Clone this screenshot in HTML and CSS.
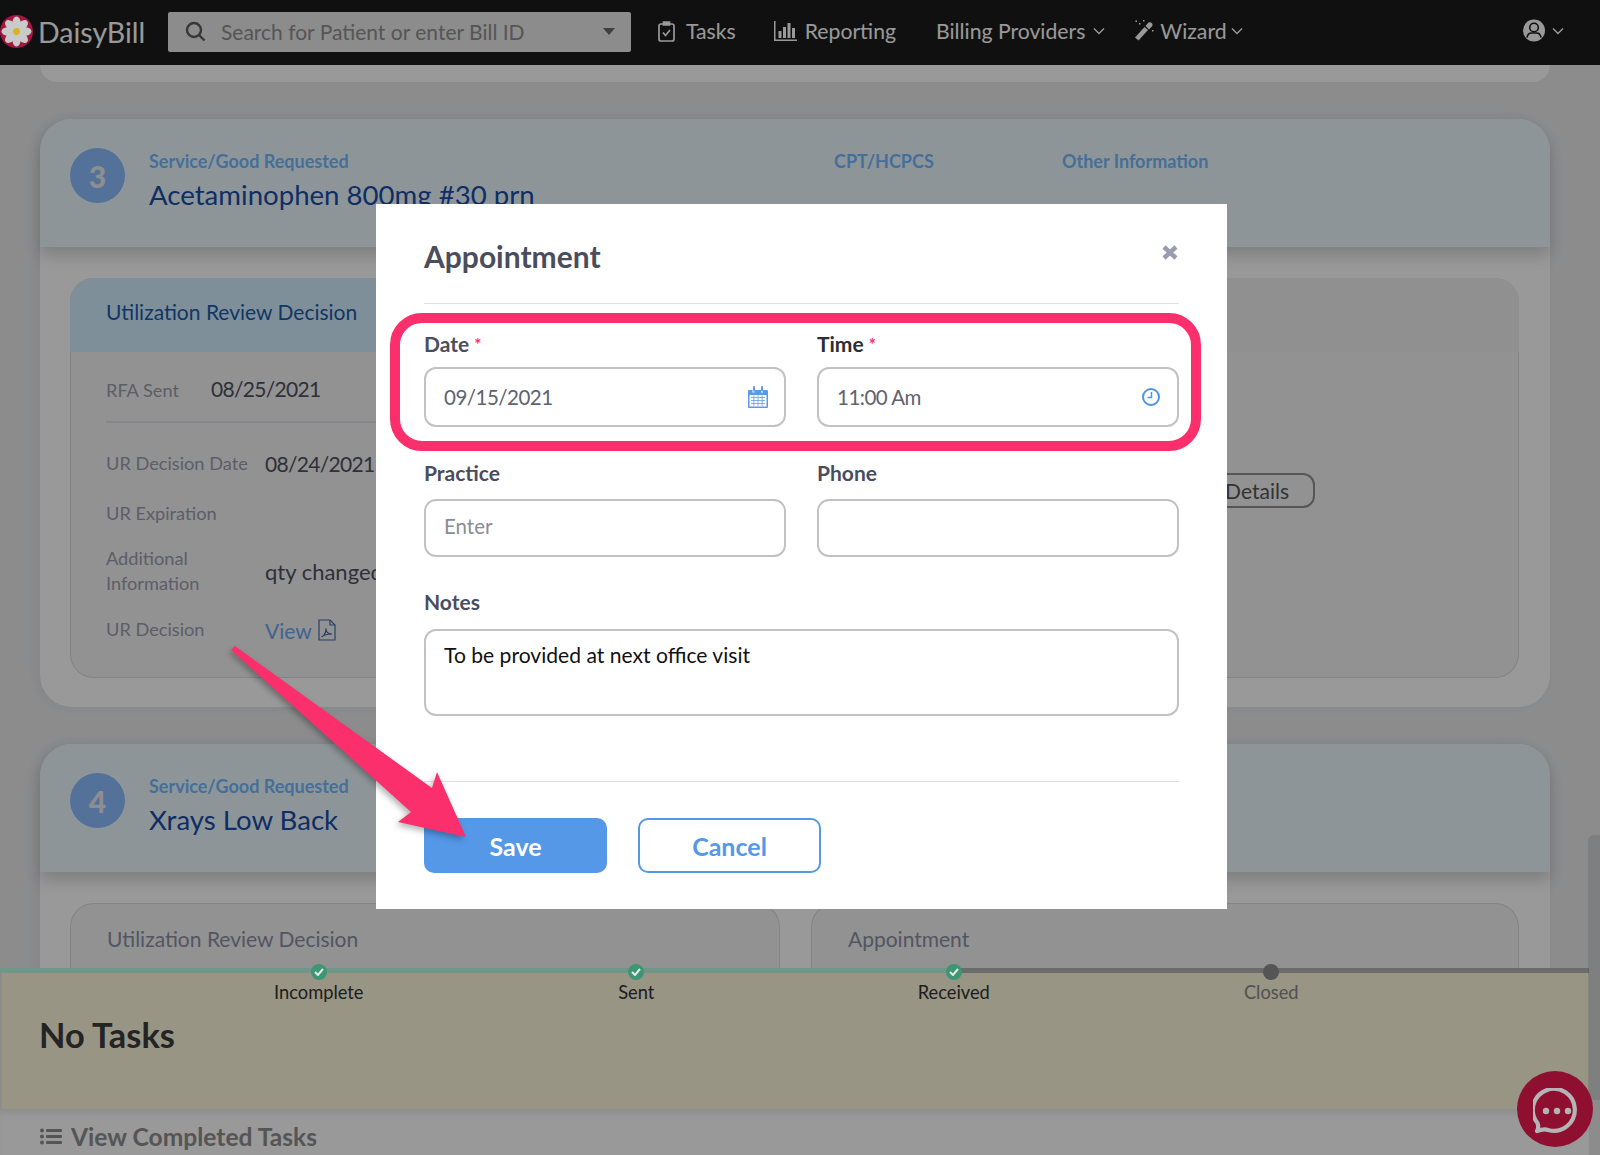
FILE: index.html
```html
<!DOCTYPE html>
<html lang="en">
<head>
    <meta charset="UTF-8">
    <meta name="viewport" content="width=device-width, initial-scale=1.0">
    <title>DaisyBill</title>
    <link rel="stylesheet" href="styles.css">
</head>
<body>
    <div class="navbar">
        <div class="brand">
            <svg class="daisy" width="33" height="33" viewBox="0 0 33 33">
                <circle cx="16.5" cy="16.5" r="16.5" fill="#a4163f"/>
                <g fill="#cacaca">
                    <ellipse cx="16.5" cy="8" rx="4.2" ry="6.5"/>
                    <ellipse cx="16.5" cy="8" rx="4.2" ry="6.5" transform="rotate(45 16.5 16.5)"/>
                    <ellipse cx="16.5" cy="8" rx="4.2" ry="6.5" transform="rotate(90 16.5 16.5)"/>
                    <ellipse cx="16.5" cy="8" rx="4.2" ry="6.5" transform="rotate(135 16.5 16.5)"/>
                    <ellipse cx="16.5" cy="8" rx="4.2" ry="6.5" transform="rotate(180 16.5 16.5)"/>
                    <ellipse cx="16.5" cy="8" rx="4.2" ry="6.5" transform="rotate(225 16.5 16.5)"/>
                    <ellipse cx="16.5" cy="8" rx="4.2" ry="6.5" transform="rotate(270 16.5 16.5)"/>
                    <ellipse cx="16.5" cy="8" rx="4.2" ry="6.5" transform="rotate(315 16.5 16.5)"/>
                </g>
                <circle cx="16.5" cy="16.5" r="3.4" fill="#d8b41e"/>
            </svg>
            <span>DaisyBill</span>
        </div>
        <div class="search">
            <svg width="21" height="21" viewBox="0 0 21 21" fill="none" stroke="#5c5c5c" stroke-width="2.4">
                <circle cx="9" cy="9" r="7"/>
                <path d="M14 14l5.5 5.5"/>
            </svg>
            <span class="search-text">Search for Patient or enter Bill ID</span>
            <span class="caret"></span>
        </div>
        <div class="nav-item nav-tasks">
            <svg width="17" height="22" viewBox="0 0 17 22" fill="none" stroke="#fff" stroke-width="1.7">
                <rect x="1" y="4" width="15" height="17" rx="2"/>
                <path d="M5.5 5V2h6v3z" fill="#fff"/>
                <path d="M5 12.5l2.5 3 4.500-5.500"/>
            </svg>
            <span>Tasks</span>
        </div>
        <div class="nav-item nav-reporting">
            <svg width="23" height="20" viewBox="0 0 23 20" fill="#fff">
                <path d="M0 0h1.500v18.500H23V20H0z"/>
                <path d="M4.500 10h3v7h-3zM9 6h3v11H9zM13.500 2h3v15h-3zM18 7h3v10h-3z"/>
            </svg>
            <span>Reporting</span>
        </div>
        <div class="nav-item nav-billing">
            <span>Billing Providers</span>
            <svg class="chev" width="12" height="8" viewBox="0 0 12 8" fill="none" stroke="#fff" stroke-width="1.4"><path d="M1 1.500l5 5 5-5"/></svg>
        </div>
        <div class="nav-item nav-wizard">
            <svg width="20" height="21" viewBox="0 0 20 21" fill="#fff">
                <path d="M1 17.500L10.500 7l3.500 3L4.500 20.500z"/>
                <path d="M11.500 6l3-3.500c1-.8 2.500-.2 3.500.8.700 1 .800 2 0 3l-3 3.200z"/>
                <path d="M5 3h1.500v1.500H5zM9 0h1.500v1.500H9zM1.500 .5H3V2H1.500zM18 10h1.500v1.500H18z"/>
            </svg>
            <span>Wizard</span>
            <svg class="chev" width="12" height="8" viewBox="0 0 12 8" fill="none" stroke="#fff" stroke-width="1.4"><path d="M1 1.500l5 5 5-5"/></svg>
        </div>
        <div class="nav-item nav-user">
            <svg width="22" height="23" viewBox="0 0 22 23" fill="none">
                <circle cx="11" cy="11.500" r="11" fill="#fff"/>
                <circle cx="11" cy="8.500" r="4.300" stroke="#1c1c1c" stroke-width="1.600"/>
                <path d="M4 18.500c.5-3 2.500-4.500 4.500-4.500h5c2 0 4 1.500 4.500 4.500" stroke="#1c1c1c" stroke-width="1.600"/>
            </svg>
            <svg class="chev" width="12" height="8" viewBox="0 0 12 8" fill="none" stroke="#fff" stroke-width="1.4"><path d="M1 1.500l5 5 5-5"/></svg>
        </div>
    </div>

    <div class="page">
        <div class="card-stub"></div>

        <div class="card">
            <div class="card-head">
                <div class="step">3</div>
                <div class="head-main">
                    <div class="head-label">Service/Good Requested</div>
                    <div class="head-title">Acetaminophen 800mg #30 prn</div>
                </div>
                <div class="head-label head-cpt">CPT/HCPCS</div>
                <div class="head-label head-other">Other Information</div>
            </div>
            <div class="card-body">
                <div class="panel">
                    <div class="panel-head panel-head-blue">Utilization Review Decision</div>
                    <div class="rfa-row">
                        <span class="dt">RFA Sent</span>
                        <span class="dd date">08/25/2021</span>
                    </div>
                    <div class="dl">
                        <span class="dt">UR Decision Date</span><span class="dd date">08/24/2021</span>
                        <span class="dt">UR Expiration</span><span class="dd"></span>
                        <span class="dt dt-wrap">Additional Information</span><span class="dd">qty changed</span>
                        <span class="dt">UR Decision</span>
                        <span class="dd view-link">View
                            <svg width="18" height="22" viewBox="0 0 18 22" fill="none" stroke="#3f6ba5" stroke-width="1.200">
                                <path d="M1 1h11l5 5v15H1z"/>
                                <path d="M12 1v5h5"/>
                                <path d="M3.500 18c3-1.500 4.500-5 4.500-8.500 0 3 2 5.500 6 5.500-3 0-7.500 .5-10.500 3z"/>
                            </svg>
                        </span>
                    </div>
                </div>
                <div class="panel">
                    <div class="panel-head">Appointment</div>
                    <div class="panel-action">
                        <div class="outline-btn">View Details</div>
                    </div>
                </div>
            </div>
        </div>

        <div class="card card-last">
            <div class="card-head">
                <div class="step">4</div>
                <div class="head-main">
                    <div class="head-label">Service/Good Requested</div>
                    <div class="head-title">Xrays Low Back</div>
                </div>
            </div>
            <div class="card-body">
                <div class="panel">
                    <div class="panel-head panel-head-plain">Utilization Review Decision</div>
                </div>
                <div class="panel">
                    <div class="panel-head panel-head-plain">Appointment</div>
                </div>
            </div>
        </div>
    </div>

    <div class="footer">
        <div class="task-bar">
            <div class="track"><div class="track-done"></div></div>
            <div class="stages">
                <div class="stage">
                    <span class="dot"><svg width="10" height="8" viewBox="0 0 10 8" fill="none" stroke="#e8e8e8" stroke-width="2"><path d="M1 4l3 3 5-6"/></svg></span>
                    Incomplete
                </div>
                <div class="stage">
                    <span class="dot"><svg width="10" height="8" viewBox="0 0 10 8" fill="none" stroke="#e8e8e8" stroke-width="2"><path d="M1 4l3 3 5-6"/></svg></span>
                    Sent
                </div>
                <div class="stage">
                    <span class="dot"><svg width="10" height="8" viewBox="0 0 10 8" fill="none" stroke="#e8e8e8" stroke-width="2"><path d="M1 4l3 3 5-6"/></svg></span>
                    Received
                </div>
                <div class="stage stage-off">
                    <span class="dot"></span>
                    Closed
                </div>
            </div>
            <h2>No Tasks</h2>
        </div>
        <div class="completed">
            <svg width="22" height="17" viewBox="0 0 22 17" fill="#8e8e8e">
                <circle cx="2" cy="2.500" r="2"/><circle cx="2" cy="8.500" r="2"/><circle cx="2" cy="14.500" r="2"/>
                <rect x="6" y="1" width="16" height="3" rx="1"/><rect x="6" y="7" width="16" height="3" rx="1"/><rect x="6" y="13" width="16" height="3" rx="1"/>
            </svg>
            <span>View Completed Tasks</span>
        </div>
    </div>

    <div class="scrim"></div>
    <div class="scroll-thumb"></div>

    <div class="chat">
        <svg width="48" height="46" viewBox="0 0 48 46" fill="none">
            <path d="M4 43c1.500-2.500 1.500-5 .5-8A21 21 0 1 1 15 42c-3.500-1.500-7-.5-11 1z" stroke="#b4b4b4" stroke-width="4.200" stroke-linejoin="round"/>
            <circle cx="13" cy="23" r="3.200" fill="#b4b4b4"/><circle cx="24" cy="23" r="3.200" fill="#b4b4b4"/><circle cx="35" cy="23" r="3.200" fill="#b4b4b4"/>
        </svg>
    </div>

    <div class="modal">
        <div class="modal-head">
            <h3>Appointment</h3>
            <svg class="close" width="16" height="15" viewBox="0 0 16 15" fill="none" stroke="#9a9cae" stroke-width="4.500"><path d="M2 2l12 11M14 2L2 13"/></svg>
        </div>

        <div class="highlight"></div>

        <div class="form-row row-first">
            <div class="field">
                <label>Date <em>*</em></label>
                <div class="input input-tall">
                    <span>09/15/2021</span>
                    <svg width="20" height="22" viewBox="0 0 20 22" fill="#5a9be8">
                        <path d="M1 4h3.500v2.500h2V4h6.500v2.500h2V4H19a1 1 0 0 1 1 1v16a1 1 0 0 1-1 1H1a1 1 0 0 1-1-1V5a1 1 0 0 1 1-1zM1.500 9v11.500h17V9z"/>
                        <rect x="5" y="0" width="2" height="5.500" rx="1"/><rect x="13" y="0" width="2" height="5.500" rx="1"/>
                        <path d="M3 11h14v.8H3zM3 14h14v.8H3zM3 17h14v.8H3zM5.500 9.500h.8V20h-.8zM9.600 9.500h.8V20h-.8zM13.700 9.500h.8V20h-.8z"/>
                    </svg>
                </div>
            </div>
            <div class="field">
                <label class="label-dark">Time <em>*</em></label>
                <div class="input input-tall">
                    <span>11:00 Am</span>
                    <svg class="clock" width="18" height="18" viewBox="0 0 18 18" fill="none" stroke="#4d94e6" stroke-width="2">
                        <circle cx="9" cy="9" r="8"/>
                        <path d="M9.500 4v5.500H5.500" stroke-width="1.500"/>
                    </svg>
                </div>
            </div>
        </div>

        <div class="form-row row-second">
            <div class="field">
                <label>Practice</label>
                <div class="input"><span class="placeholder">Enter</span></div>
            </div>
            <div class="field">
                <label>Phone</label>
                <div class="input"></div>
            </div>
        </div>

        <div class="field field-notes">
            <label>Notes</label>
            <div class="input input-area">To be provided at next office visit</div>
        </div>

        <div class="modal-foot">
            <div class="btn btn-save">Save</div>
            <div class="btn btn-cancel">Cancel</div>
        </div>
    </div>

    <svg class="arrow" width="260" height="210" viewBox="225 640 260 210">
        <polygon points="231,650 235,646 432,788 437,772 466,837 398,822 411,812" fill="#fb2f6b"/>
    </svg>
</body>
</html>
```

FILE: styles.css
```css
* { margin: 0; padding: 0; box-sizing: border-box; }
html, body { height: 100%; overflow: hidden; }
body { font-family: Lato, "Open Sans", sans-serif; background: #e9eaec; color: #333; position: relative; }

/* top bar */
.navbar { height: 65px; background: #1c1c1c; display: flex; align-items: center; color: #fff; font-size: 21.2px; padding-bottom: 2px; }
.brand { display: flex; align-items: center; width: 168px; }
.brand span { margin-left: 5px; font-size: 28.5px; color: #fff; }
.daisy { position: relative; z-index: 2; }
.search { width: 463px; height: 40px; background: #e9e9e9; border-radius: 2px; display: flex; align-items: center; padding: 0 16px 0 17px; }
.search-text { margin-left: 15px; flex: 1; color: #8e8e8e; font-size: 21px; }
.caret { width: 0; height: 0; border-left: 6px solid transparent; border-right: 6px solid transparent; border-top: 7px solid #6a6a6a; }
.nav-item { display: flex; align-items: center; margin-bottom: 2px; }
.nav-tasks { margin-left: 27px; gap: 11px; }
.nav-reporting { margin-left: 38px; gap: 8px; }
.nav-billing { margin-left: 40px; gap: 8px; }
.nav-wizard { margin-left: 29px; gap: 6px; }
.nav-wizard .chev { margin-left: -2px; }
.nav-user { margin-left: 280px; gap: 7px; }

/* page behind the dialog */
.page { padding: 0 50px 0 40px; }
.card-stub { height: 17px; background: #fff; border-radius: 0 0 24px 24px; margin-bottom: 37px; }
.card { background: #fff; border-radius: 32px; margin-bottom: 37px; height: 588px; box-shadow: -4px 0 14px rgba(0,0,0,.05); }
.card-last { height: 411px; margin-bottom: 0; border-radius: 32px 32px 0 0; }
.card-head { height: 128px; background: #edf9ff; border-radius: 32px 32px 0 0; display: flex; padding: 29px 30px 0; box-shadow: 0 8px 16px rgba(0,0,0,.18); }
.step { width: 55px; height: 55px; border-radius: 50%; background: #8abcff; color: #e9edf2; font-weight: 900; font-size: 30px; display: flex; align-items: center; justify-content: center; flex-shrink: 0; }
.head-main { margin-left: 24px; width: 685px; padding-top: 2px; }
.head-cpt { width: 228px; padding-top: 2px; }
.head-other { padding-top: 2px; }
.head-label { color: #72baff; font-size: 18px; font-weight: 700; line-height: 22px; }
.head-title { color: #184ea8; font-size: 27.6px; line-height: 34px; margin-top: 6px; }
.card-body { display: grid; grid-template-columns: 710px 708px; gap: 31px; padding: 31px 30px 0; }
.panel { height: 400px; background: #f4f4f4; border-radius: 24px; overflow: hidden; box-shadow: inset 0 0 0 1px #dcdcdc; }
.card-last .panel { height: 252px; }
.panel-head { height: 74px; background: #f1f1f1; padding: 22px 36px; font-size: 21px; color: #8b8ea3; }
.panel-head-blue { background: #d4eeff; color: #1d5ba8; padding-top: 21px; }
.panel-head-plain { background: transparent; padding-top: 23px; padding-left: 37px; }
.rfa-row { margin: 0 36px; padding-top: 24px; height: 71px; border-bottom: 2px solid #dedfe6; display: flex; align-items: baseline; }
.rfa-row .dt { width: 105px; }
.dt { color: #9a9cae; font-size: 18.2px; line-height: 25.5px; }
.dd { color: #4f5160; font-size: 22px; }
.date { font-size: 21px; letter-spacing: -.7px; }
.dl { display: grid; grid-template-columns: 159px 1fr; align-items: center; grid-template-rows: 47px 53px 62px 56px; padding: 17px 36px 0; }
.dt-wrap { width: 110px; }
.view-link { color: #6ba6f0; display: flex; align-items: center; gap: 6px; font-size: 21px; }
.panel-action { display: flex; justify-content: flex-end; padding: 121px 204px 0 0; }
.outline-btn { height: 35px; padding: 0 24px; border: 2px solid #8f8f8f; border-radius: 12px; font-size: 21px; color: #555; line-height: 31px; }

/* bottom strip */
.footer { position: absolute; left: 0; right: 0; top: 968px; bottom: 0; }
.task-bar { height: 141px; margin: 0 11px 0 2px; position: relative; padding-top: 5px; background: #fdf8de; background-clip: content-box; }
.track { position: absolute; left: -2px; right: 0; top: 0; height: 5px; background: #b4b4b4; }
.track-done { width: 954px; height: 5px; background: #bbfae6; }
.stages { display: flex; padding-left: 158px; margin-top: -9px; position: relative; }
.stage { width: 317.5px; display: flex; flex-direction: column; align-items: center; font-size: 18.3px; line-height: 22px; color: #333; gap: 1px; }
.stage-off { color: #888; }
.dot { width: 16px; height: 16px; border-radius: 50%; background: #3d9674; display: flex; align-items: center; justify-content: center; position: relative; z-index: 2; }
.stage-off .dot { background: #555; }
.task-bar h2 { font-size: 34.4px; font-weight: 700; margin: 12px 0 0 37px; color: #3c3c3c; line-height: 40px; }
.completed { height: 46px; margin-right: 11px; padding: 8px 0 0 40px; background: #fff; display: flex; align-items: center; gap: 9px; color: #8e8e8e; font-size: 24.6px; font-weight: 700; box-shadow: inset 0 8px 10px -6px rgba(0,0,0,.12); }

.scrim { position: fixed; inset: 0; background: rgba(0,0,0,.4); z-index: 1; }
.scroll-thumb { position: fixed; left: 1588px; top: 835px; width: 12px; height: 265px; border-radius: 6px 0 0 6px; background: rgba(0,0,0,.1); z-index: 2; }
.chat { position: fixed; left: 1517px; top: 1071px; width: 76px; height: 76px; padding: 3px 0 0 4px; border-radius: 50%; background: #8e0f30; display: flex; align-items: center; justify-content: center; z-index: 2; }

/* dialog */
.modal { position: fixed; left: 376px; top: 204px; width: 851px; height: 705px; background: #fff; padding: 36px 48px; z-index: 3; }
.modal-head { height: 66px; margin-top: -2px; border-bottom: 1px solid #dedfe3; margin-bottom: 28px; }
.modal-head h3 { font-size: 30px; line-height: 36px; font-weight: 700; color: #4a4d5e; }
.close { position: absolute; right: 49px; top: 41px; }
.highlight { position: absolute; left: 14px; top: 109px; width: 811px; height: 138px; border: 10px solid #fb2f6b; border-radius: 32px; }
.form-row { display: grid; grid-template-columns: 362px 362px; gap: 31px; }
.row-second { margin-top: 34px; }
.field label { display: block; height: 24px; line-height: 24px; font-size: 21px; font-weight: 700; color: #4a4d5e; margin-bottom: 14px; }
.row-first label { margin-bottom: 11px; }
.label-dark { color: #2c2d35 !important; }
.field em { color: #fb2f6b; font-style: normal; font-size: 17px; vertical-align: 1px; }
.input { height: 58px; border: 2px solid #c2c2c2; border-radius: 12px; padding: 0 16px 4px 18px; display: flex; align-items: center; justify-content: space-between; font-size: 20.5px; color: #5f6270; }
.input-tall { height: 60px; padding-bottom: 0; letter-spacing: -.5px; }
.clock { margin-right: 1px; }
.placeholder { color: #8a8c98; }
.field-notes { margin-top: 33px; }
.field-notes label { margin-bottom: 15px; }
.input-area { height: 87px; align-items: flex-start; padding-top: 11px; color: #111; font-size: 21.1px; }
.modal-foot { margin-top: 65px; border-top: 1px solid #dedfe3; padding-top: 36px; display: flex; gap: 31px; }
.btn { width: 183px; height: 55px; border-radius: 10px; display: flex; align-items: center; justify-content: center; font-size: 25px; font-weight: 700; }
.btn-save { background: #5598e8; color: #fff; }
.btn-cancel { border: 2px solid #5598e8; color: #5598e8; }

.arrow { position: fixed; left: 225px; top: 640px; z-index: 4; filter: drop-shadow(-2px 3px 3px rgba(0,0,0,.3)); }
```
